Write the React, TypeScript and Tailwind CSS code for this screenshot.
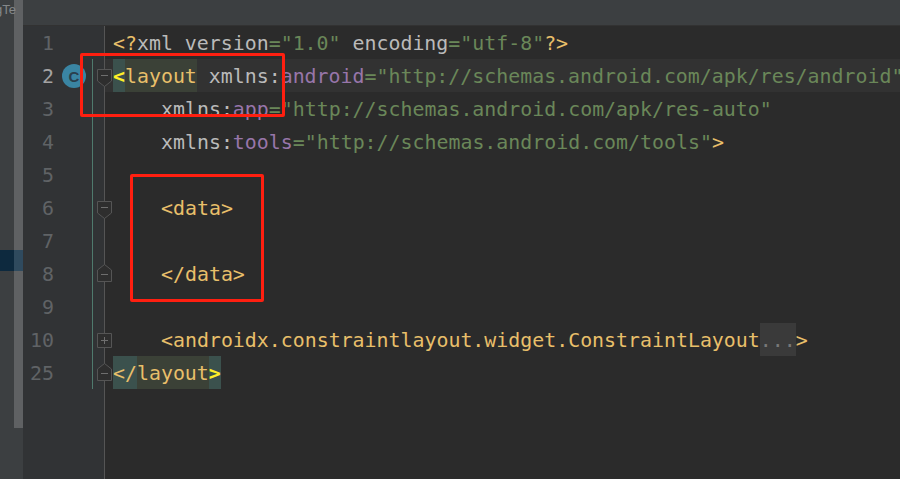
const orange = "text-[#e8bf6a]";
const light = "text-[#bababa]";
const purple = "text-[#9876aa]";
const green = "text-[#6a8759]";

function FoldIcon({ kind }: { kind: "open" | "close" | "plus" }) {
  const outline =
    kind === "open"
      ? "M0.5 10.5H14.5V22L7.5 27.5L0.5 22Z"
      : kind === "close"
        ? "M0.5 24.5H14.5V13L7.5 7.5L0.5 13Z"
        : "M0.5 10.5H14.5V24.5H0.5Z";
  const midY = kind === "open" ? 16.5 : 17.5;
  return (
    <svg width="15" height="33" viewBox="0 0 15 33">
      <path d={outline} fill="#2e2e2e" stroke="#555555" strokeWidth="1" />
      <path d={`M4 ${midY}H11`} stroke="#6e6e6e" strokeWidth="1" />
      {kind === "plus" && <path d="M7.5 14V21" stroke="#6e6e6e" strokeWidth="1" />}
    </svg>
  );
}

type Row = {
  num: number;
  fold?: "open" | "close" | "plus";
  badge?: boolean;
  active?: boolean;
  code?: React.ReactNode;
};

const rows: Row[] = [
  {
    num: 1,
    code: (
      <>
        <span className={orange}>&lt;?</span>
        <span className={light}>xml version</span>
        <span className={green}>="1.0" </span>
        <span className={light}>encoding</span>
        <span className={green}>="utf-8"</span>
        <span className={orange}>?&gt;</span>
      </>
    ),
  },
  {
    num: 2,
    fold: "open",
    badge: true,
    active: true,
    code: (
      <>
        <span className="inline-block h-[33px] bg-[#3b514d] font-bold text-[#ffef28]">&lt;</span>
        <span className={`inline-block h-[33px] bg-[#3b4137] ${orange}`}>layout</span>
        <span className={light}> xmlns:</span>
        <span className={purple}>android</span>
        <span className={green}>="http://schemas.android.com/apk/res/android"</span>
      </>
    ),
  },
  {
    num: 3,
    code: (
      <span className="pl-[48px]">
        <span className={light}>xmlns:</span>
        <span className={purple}>app</span>
        <span className={green}>="http://schemas.android.com/apk/res-auto"</span>
      </span>
    ),
  },
  {
    num: 4,
    code: (
      <span className="pl-[48px]">
        <span className={light}>xmlns:</span>
        <span className={purple}>tools</span>
        <span className={green}>="http://schemas.android.com/tools"</span>
        <span className={orange}>&gt;</span>
      </span>
    ),
  },
  { num: 5 },
  { num: 6, fold: "open", code: <span className={`pl-[48px] ${orange}`}>&lt;data&gt;</span> },
  { num: 7 },
  { num: 8, fold: "close", code: <span className={`pl-[48px] ${orange}`}>&lt;/data&gt;</span> },
  { num: 9 },
  {
    num: 10,
    fold: "plus",
    code: (
      <span className={`pl-[48px] ${orange}`}>
        &lt;androidx.constraintlayout.widget.ConstraintLayout
        <span className="inline-block h-[33px] bg-[#3a3a3a] text-[#787878]">...</span>
        &gt;
      </span>
    ),
  },
  {
    num: 25,
    fold: "close",
    code: (
      <>
        <span className={`inline-block h-[33px] bg-[#3b514d] ${orange}`}>&lt;/</span>
        <span className={`inline-block h-[33px] bg-[#3b4137] ${orange}`}>layout</span>
        <span className="inline-block h-[33px] bg-[#3b514d] font-bold text-[#ffef28]">&gt;</span>
      </>
    ),
  },
];

export default function App() {
  return (
    <div className="flex h-[479px] w-[900px] overflow-hidden bg-[#2b2b2b] font-['DejaVu_Sans_Mono','Liberation_Mono',monospace] text-[19.9px]">
      {/* project panel sliver + its scrollbar */}
      <div className="relative flex w-[23px] shrink-0 bg-[#3c3f41]">
        <div className="w-[14px] shrink-0">
          <div className="mt-[250px] h-[21px] bg-[#0d293e]" />
        </div>
        <div className="h-[428px] w-[9px] bg-[#5f6163]">
          <div className="mt-[250px] h-[21px] bg-[#2f4a5e]" />
        </div>
        <span className="absolute left-[-5px] top-[0px] whitespace-nowrap font-['Liberation_Sans',sans-serif] text-[13px] text-[#85888a]">
          gTe
        </span>
      </div>

      <div className="flex min-w-0 flex-1 flex-col">
        <div className="h-[26px] shrink-0 border-b border-[#323232] bg-[#3c3f41]" />

        <div className="relative flex-1">
          {/* gutter background */}
          <div className="absolute inset-y-0 left-0 w-[82px] border-r border-[#555555] bg-[#313335]" />
          {/* VCS change line */}
          <div className="absolute left-[69px] top-[33px] h-[330px] w-px bg-[#4f7a6d]" />

          <div className="relative leading-[35px]">
            {rows.map((row) => (
              <div
                key={row.num}
                className={`flex h-[33px] items-start ${row.active ? "bg-[linear-gradient(to_right,transparent_82px,#323232_82px)]" : ""}`}
              >
                <div
                  className={`w-[31px] shrink-0 text-right ${row.active ? "text-[#a4a3a3]" : "text-[#606366]"}`}
                >
                  {row.num}
                </div>
                <div className="flex w-[32px] shrink-0 justify-end">
                  {row.badge && (
                    <div className="mt-[5px] flex size-[24px] items-center justify-center rounded-full bg-[#3a85a3] font-['Liberation_Sans',sans-serif] text-[15px] leading-none font-bold text-[#2a3f4d]">
                      C
                    </div>
                  )}
                </div>
                <div className="ml-[11px] w-[15px] shrink-0">
                  {row.fold && <FoldIcon kind={row.fold} />}
                </div>
                <div className="ml-[1px] h-[33px] whitespace-pre">{row.code}</div>
              </div>
            ))}
          </div>

          {/* annotation boxes */}
          <div className="absolute left-[57px] top-[27px] h-[64px] w-[205px] rounded-[2px] border-[3px] border-[#ff1f10]" />
          <div className="absolute left-[107px] top-[148px] h-[128px] w-[134px] rounded-[2px] border-[3px] border-[#ff1f10]" />
        </div>
      </div>
    </div>
  );
}
